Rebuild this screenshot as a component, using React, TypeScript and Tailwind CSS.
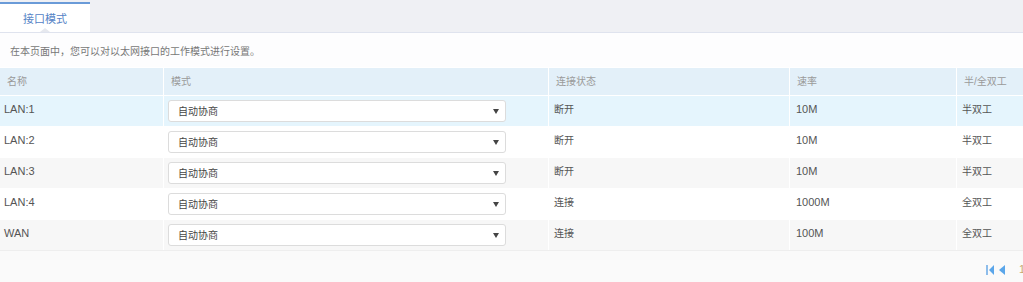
import React from 'react';

const rows = [
  { name: 'LAN:1', status: '断开', speed: '10M', duplex: '半双工' },
  { name: 'LAN:2', status: '断开', speed: '10M', duplex: '半双工' },
  { name: 'LAN:3', status: '断开', speed: '10M', duplex: '半双工' },
  { name: 'LAN:4', status: '连接', speed: '1000M', duplex: '全双工' },
  { name: 'WAN', status: '连接', speed: '100M', duplex: '全双工' },
];

const cols = ['w-[163px]', 'w-[385px]', 'w-[241px]', 'w-[167px]', 'flex-1'];

export default function App() {
  return (
    <div
      className="w-[1023px] h-[282px] overflow-hidden bg-[#fafafa] text-[11px]"
      style={{ fontFamily: '"Liberation Sans", "Noto Sans CJK SC", sans-serif' }}
    >
      {/* tab bar */}
      <div className="h-[33px] bg-[#eff0f4] border-b border-[#dfe3ee] flex items-end">
        <div className="relative w-[90px] h-[30px] bg-white border-t-2 border-[#6a9bd8] flex items-center justify-center pt-[3px]">
          <span className="text-[11px] text-[#5583c6]">接口模式</span>
          <span className="absolute bottom-0 left-[40px] w-0 h-0 border-x-[5px] border-x-transparent border-b-[4px] border-b-[#e6e8ee]" />
        </div>
      </div>

      {/* description */}
      <div className="h-[34px] bg-[#fdfdfe] flex items-center pl-[10px] pt-[3px] text-[10px] text-[#777]">
        在本页面中，您可以对以太网接口的工作模式进行设置。
      </div>

      {/* table */}
      <div className="bg-[#f9f9f9]">
        <div className="flex h-[28px] bg-[#e3f0f9] border-t border-white text-[10px] text-[#9a9a9a]">
          {['名称', '模式', '连接状态', '速率', '半/全双工'].map((h, i) => (
            <div
              key={h}
              className={`${cols[i]} flex items-center pl-[7px] ${i > 0 ? 'border-l border-white' : ''}`}
            >
              {h}
            </div>
          ))}
        </div>
        {rows.map((r, idx) => {
          const bg = idx === 0 ? 'bg-[#e5f5fd]' : idx % 2 === 1 ? 'bg-white' : 'bg-[#f7f7f7]';
          return (
            <div key={r.name} className={`flex h-[31px] border-t border-white ${bg} text-[#555]`}>
              <div className={`${cols[0]} flex items-center pl-[4px] pb-[3px]`}>{r.name}</div>
              <div className={`${cols[1]} flex items-center border-l border-white pl-[4px]`}>
                <div className="w-[338px] h-[22px] bg-white border border-[#dcdcdc] rounded-[3px] flex items-center justify-between pl-[9px] pr-[6px] text-[#444]">
                  <span className="text-[10px]">自动协商</span>
                  <span className="w-0 h-0 border-x-[3px] border-x-transparent border-t-[5px] border-t-[#444]" />
                </div>
              </div>
              <div className={`${cols[2]} flex items-center border-l border-white pl-[5px] pb-[3px] text-[10px]`}>
                {r.status}
              </div>
              <div className={`${cols[3]} flex items-center border-l border-white pl-[6px] pb-[3px]`}>
                {r.speed}
              </div>
              <div className={`${cols[4]} flex items-center border-l border-white pl-[5px] pb-[3px] text-[10px]`}>
                {r.duplex}
              </div>
            </div>
          );
        })}
        <div className="h-px bg-[#eeeeee]" />
      </div>

      {/* pager */}
      <div className="h-[30px] bg-[#fafafa] flex items-center justify-end pt-[7px]">
        <div className="flex items-center gap-[2px] mr-[-6px]">
          <svg width="8" height="10" viewBox="0 0 8 10">
            <rect x="0" y="0" width="2" height="10" fill="#8dbdeb" />
            <polygon points="8,0 3,5 8,10" fill="#5aa6ea" />
          </svg>
          <svg width="8" height="10" viewBox="0 0 8 10" className="ml-[2px]">
            <polygon points="7,0 1,5 7,10" fill="#5aa6ea" />
          </svg>
          <span className="ml-[11px] text-[#c8a870] w-[10px]">1</span>
        </div>
      </div>
    </div>
  );
}
